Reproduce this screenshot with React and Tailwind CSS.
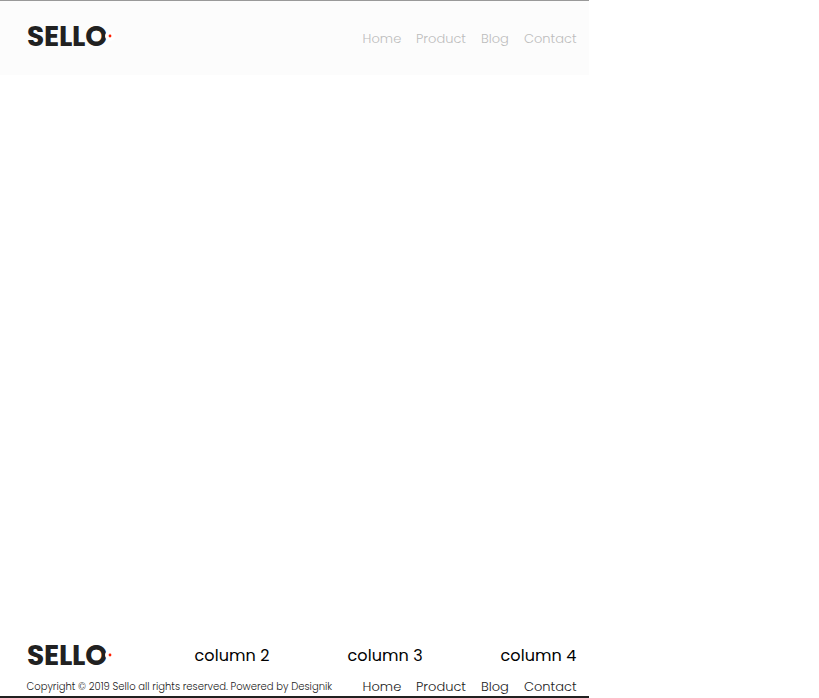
const NAV = [
  { label: "Home", box: "w-[38.5px] tracking-[0.1px]" },
  { label: "Product", box: "w-[50px]" },
  { label: "Blog", box: "w-[28px]" },
  { label: "Contact", box: "w-[53px]" },
];

function Logo() {
  return (
    <a href="#" className="relative block h-[30px] w-[90px] text-[28px] leading-[32px] font-bold tracking-[-0.2px] text-[#212121]">
      SELLO
      <svg viewBox="0 0 10 10" className="absolute left-[78px] top-[10px] size-[10px]" aria-hidden="true">
        <circle cx="5" cy="5" r="5" fill="#fff" />
        <circle cx="5" cy="5" r="1.4" fill="#ff1e00" />
      </svg>
    </a>
  );
}

function Nav({ tone }) {
  return (
    <nav className={`flex gap-[15px] text-[13px] leading-5 font-light whitespace-nowrap ${tone}`}>
      {NAV.map(({ label, box }) => (
        <a key={label} href="#" className={box}>{label}</a>
      ))}
    </nav>
  );
}

export default function App() {
  return (
    <div className="h-[698px] w-full overflow-hidden bg-white font-['Poppins','Inter',sans-serif]">
      <div className="flex h-full w-[589px] flex-col justify-between">
        <header className="flex h-[75px] items-start justify-between border-t border-[#999] bg-[#fcfcfc] pr-3 pl-[27px]">
          <div className="pt-[20px]"><Logo /></div>
          <div className="pt-[28px]"><Nav tone="text-[#bdbdbd]" /></div>
        </header>
        <footer className="h-[58px] border-b-2 border-[#212121]">
          <div className="flex h-[30px] pl-[27px] text-base leading-8 tracking-[0.1px] text-black">
            <div className="w-[167.5px]"><Logo /></div>
            <p className="w-[153px]">column 2</p>
            <p className="w-[153px]">column 3</p>
            <p className="whitespace-nowrap">column 4</p>
          </div>
          <div className="flex items-start justify-between pt-[7px] pr-3 pl-[26.5px]">
            <p className="text-[10px] leading-5 font-light whitespace-nowrap text-[#212121]">
              Copyright © 2019 Sello all rights reserved. Powered by Designik
            </p>
            <Nav tone="text-[#212121]" />
          </div>
        </footer>
      </div>
    </div>
  );
}
